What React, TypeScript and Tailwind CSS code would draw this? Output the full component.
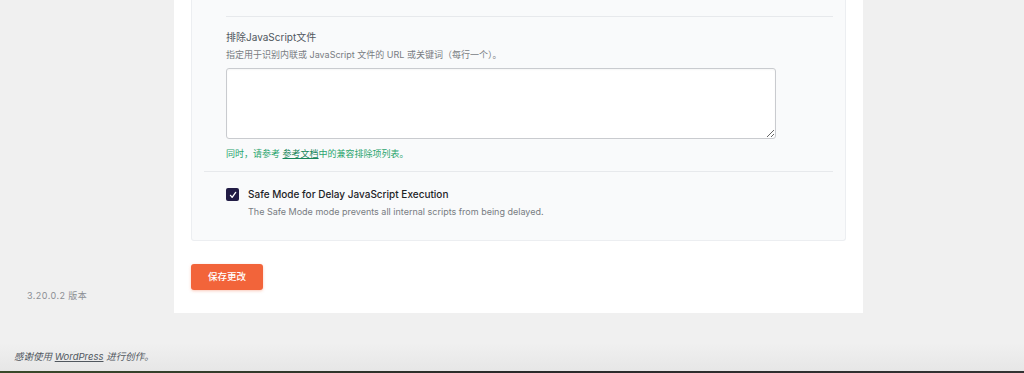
import React from "react"

const cjk = { fontFamily: "Inter, 'Noto Sans CJK SC', sans-serif" }

export default function App() {
  return (
    <div
      className="flex h-[373px] w-[1024px] flex-col overflow-hidden bg-[#f0f0f0] text-[#1d2327]"
      style={cjk}
    >
      <div className="flex h-[313px] shrink-0">
        <aside className="flex w-[174px] flex-col justify-end pb-[11px] pl-[27px]">
          <p className="text-[9px] leading-[12px] tracking-wider text-[#8c8f94]">3.20.0.2 版本</p>
        </aside>

        <main className="w-[689px] bg-white px-[17px]">
          <div className="h-[241px] rounded-b-[3px] border border-t-0 border-[#eceef1] bg-[#f9fafb] px-[12px]">
            <section className="pl-[22px]">
              <div className="h-[16px]" />
              <div className="border-t border-[#e7e9ec] pt-[13px]">
                <h3 className="text-[10px] leading-[15px] text-[#50575e]">排除JavaScript文件</h3>
                <p className="mt-[3px] text-[9px] leading-[14px] text-[#787c82]">
                  指定用于识别内联或 JavaScript 文件的 URL 或关键词（每行一个）。
                </p>
                <textarea
                  className="mt-[6px] block h-[71px] w-[550px] resize-y rounded-[3px] border border-[#c9cbcf] bg-white shadow-[inset_0_1px_2px_rgba(0,0,0,0.04)] outline-none"
                  defaultValue=""
                />
                <p className="mt-[8px] text-[9px] leading-[14px] text-[#2aa56d]">
                  同时，请参考 <a className="text-[#17855a] underline">参考文档</a>中的兼容排除项列表。
                </p>
              </div>
            </section>

            <div className="mt-[10px] border-t border-[#e7e9ec]" />

            <section className="flex gap-[9px] pl-[22px] pt-[15px]">
              <span className="mt-[1px] flex h-[13px] w-[13px] shrink-0 items-center justify-center rounded-[2px] bg-[#221c45]">
                <svg viewBox="0 0 12 12" className="h-[10px] w-[10px]">
                  <path d="M3 6.4 5 8.8 9.2 2.8" fill="none" stroke="white" strokeWidth="1.6" strokeLinecap="round" strokeLinejoin="round" />
                </svg>
              </span>
              <div>
                <p className="text-[10px] font-medium leading-[14px] text-[#1d2327]">
                  Safe Mode for Delay JavaScript Execution
                </p>
                <p className="mt-[4px] text-[9px] leading-[14px] text-[#787c82]">
                  The Safe Mode mode prevents all internal scripts from being delayed.
                </p>
              </div>
            </section>
          </div>

          <button className="mt-[23px] h-[26px] w-[72px] rounded-[3px] bg-[#f2643a] text-[9.5px] font-medium text-white shadow-[0_1px_3px_rgba(242,100,58,0.35)]">
            保存更改
          </button>
        </main>
      </div>

      <footer className="flex flex-1 flex-col justify-end bg-gradient-to-b from-[#f0f0f0] from-50% to-[#e6e6e6]">
        <p className="pb-[7px] pl-[14px] text-[9.5px] italic leading-[14px] text-[#50575e]">
          感谢使用 <a className="underline">WordPress</a> 进行创作。
        </p>
        <div className="h-[2px] bg-gradient-to-r from-[#3a4a2a] via-[#2a2a2a] to-[#333]" />
      </footer>
    </div>
  )
}
